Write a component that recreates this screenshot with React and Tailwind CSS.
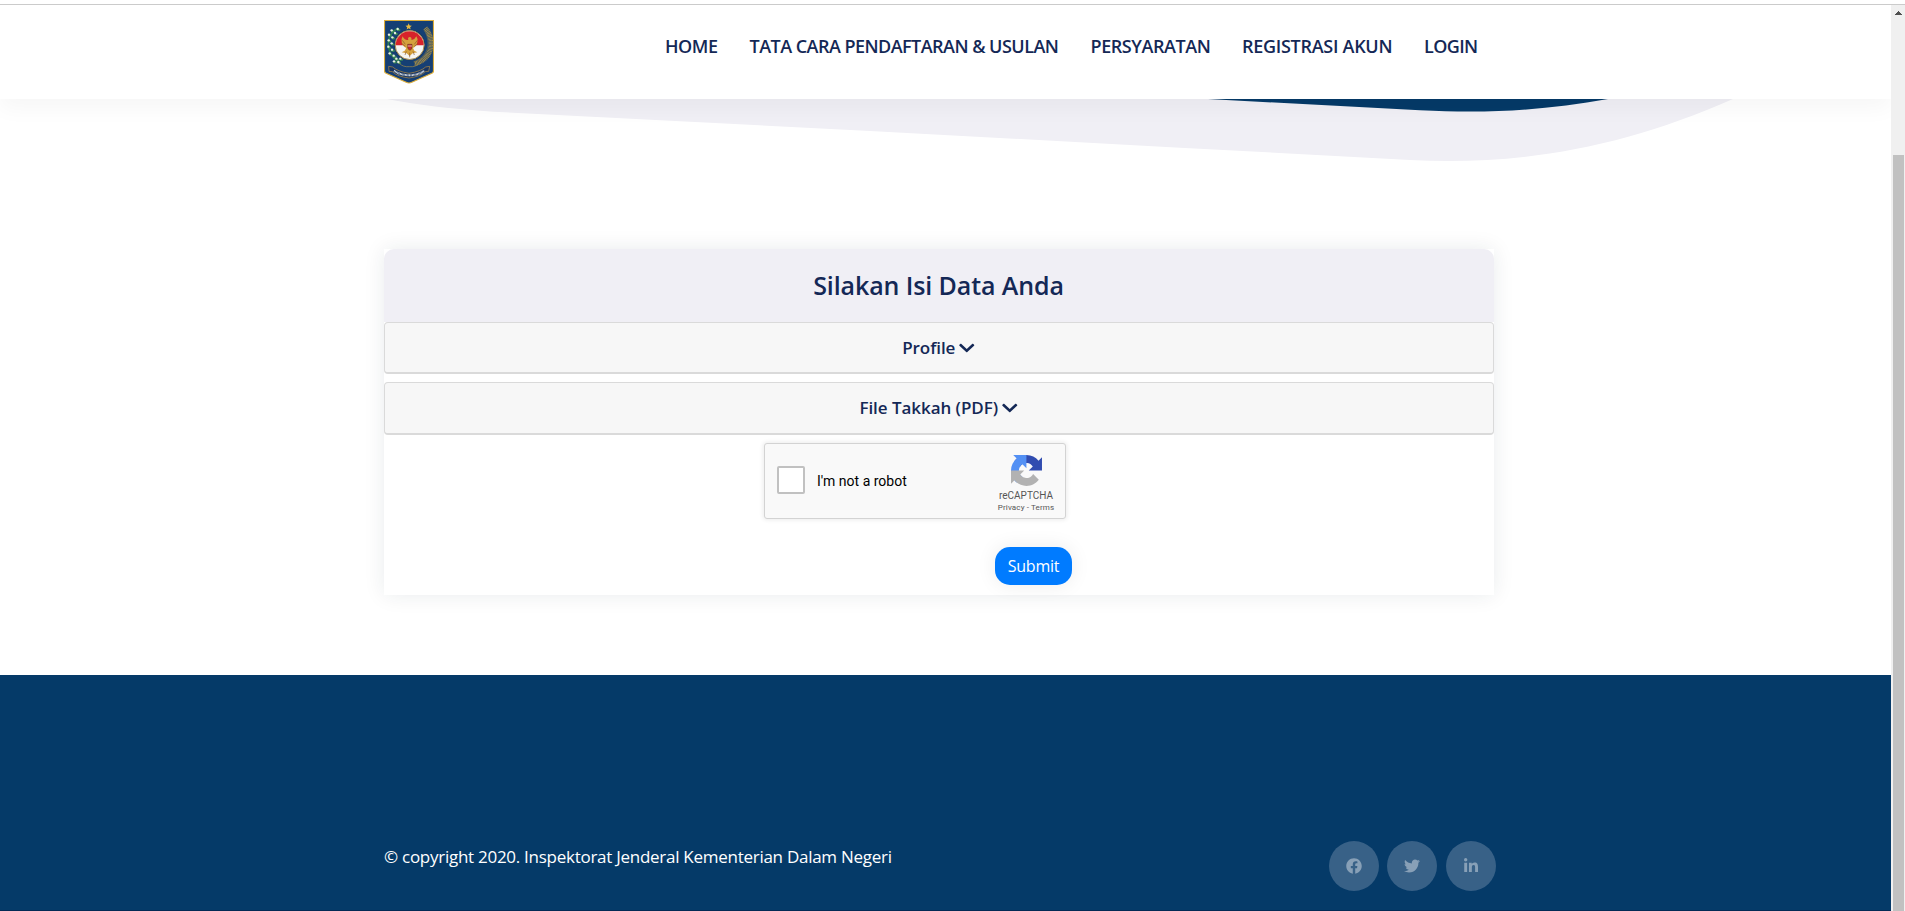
import { FaFacebook, FaTwitter, FaLinkedinIn, FaChevronDown } from 'react-icons/fa';

const NAV = [
  { label: 'HOME', box: 'w-[52.5px] tracking-[-0.45px]' },
  { label: 'TATA CARA PENDAFTARAN & USULAN', box: 'w-[309px] tracking-[-0.53px]' },
  { label: 'PERSYARATAN', box: 'w-[119.5px] tracking-[-0.42px]' },
  { label: 'REGISTRASI AKUN', box: 'w-[150px] tracking-[-0.28px]' },
  { label: 'LOGIN', box: 'w-[55px] tracking-[-0.6px]' },
];

const LEAVES = [
  [84, 87], [66, 91], [76, 99], [58, 104], [68, 112], [57, 121], [66, 130], [56, 140],
  [67, 149], [60, 160], [72, 167], [80, 176], [86, 186], [73, 184], [92, 176],
];

function Emblem() {
  return (
    <svg className="h-16 w-[50px] shrink-0" viewBox="43 60 150 192">
      <path d="M44.5 61.5h147V213q0 4-5 7l-60 27q-8.500 4-17 0l-60-27q-5-3-5-7z" fill="#153f74" stroke="#dcae3c" strokeWidth="3.500" />
      <path d="M117 70l2.700 6.500 6.800.4-5.200 4.500 1.700 6.800-6-3.700-6 3.700 1.700-6.800-5.200-4.500 6.800-.4z" fill="#e8b943" />
      <path d="M86 84C58 98 48 130 62 158q8 18 30 30" fill="none" stroke="#2d7b52" strokeWidth="5" />
      {LEAVES.map(([x, y], i) => (
        <g key={i}>
          <ellipse cx={x + 3} cy={y + 3} rx="5.500" ry="3.500" fill="#3b8a54" />
          <circle cx={x} cy={y} r="3.600" fill="#e6f0dd" />
        </g>
      ))}
      <path d="M167 84C196 118 190 178 134 191" fill="none" stroke="#a58d48" strokeWidth="15" strokeDasharray="3 1.500" />
      <path d="M171 82C198 120 190 180 134 195M163 90C184 122 180 168 132 186" fill="none" stroke="#6e6d4b" strokeWidth="2" />
      <circle cx="120" cy="135" r="46" fill="#1d3357" />
      <circle cx="120" cy="135" r="43.500" fill="#f5f5f3" stroke="#a99152" strokeWidth="3" />
      <path d="M78 136a42 42 0 0 1 84 0z" fill="#d8232a" />
      <path d="M116 120q-3-8 4-9 7 0 5 8 8 3 15-10 6 8 3 18-2 12-13 17l4 8 9 5-14 3-9 8-9-8-15-3 9-5 5-8q-12-5-14-17-2-10 3-18 6 13 17 11z" fill="#d5a13d" />
      <path d="M98 121l9 12M96 130l11 9M143 121l-9 12M146 130l-12 9M110 154l-4 11M130 154l4 11M120 158v14" stroke="#87572a" strokeWidth="2" />
      <path d="M114 133h13v9q-1 7-6 9-6-2-7-9z" fill="#c72c29" stroke="#48321f" strokeWidth="1.500" />
      <path d="M114 138h13" stroke="#eee" strokeWidth="2" />
      <path d="M57 199l12 2q14 13 49 19 36-6 50-19l12-2-3 15-10 1q-16 15-49 19-34-4-50-19l-10-1z" fill="#173461" stroke="#b98f42" strokeWidth="2" />
      <path d="M73 212q18 13 46 14 28-1 45-14" fill="none" stroke="#dfe5eb" strokeWidth="6" strokeDasharray="2.600 1.400" />
      <path d="M88 189q12 13 31 11 19 2 31-11" fill="none" stroke="#a58d48" strokeWidth="2" />
    </svg>
  );
}

function RecaptchaMark() {
  return (
    <svg className="size-[31px] opacity-90" viewBox="0 0 64 64">
      <path fill="#1c3aa9" d="M64 31.955l-.033-1.370V4.687l-7.160 7.160C50.948 4.674 42.033.093 32.050.093c-10.400 0-19.622 4.960-25.458 12.640l11.736 11.860a15.550 15.550 0 0 1 4.754-5.334c2.050-1.600 4.952-2.906 8.968-2.906.485 0 .860.057 1.135.163 4.976.393 9.288 3.140 11.828 7.124l-8.307 8.307L64 31.953" />
      <path fill="#4285f4" d="M31.862.094l-1.370.033H4.594l7.160 7.160C4.580 13.147 0 22.060 0 32.046c0 10.400 4.960 19.622 12.640 25.458L24.500 45.768a15.550 15.550 0 0 1-5.334-4.754c-1.600-2.050-2.906-4.952-2.906-8.968 0-.485.057-.860.163-1.135.393-4.976 3.140-9.288 7.124-11.828l8.307 8.307L31.860.095" />
      <path fill="#ababab" d="M.001 32.045l.033 1.370v25.898l7.160-7.160c5.860 7.173 14.774 11.754 24.760 11.754 10.400 0 19.622-4.960 25.458-12.640l-11.736-11.860a15.550 15.550 0 0 1-4.754 5.334c-2.050 1.600-4.952 2.906-8.968 2.906-.485 0-.860-.057-1.135-.163-4.976-.393-9.288-3.140-11.828-7.124l8.307-8.307c-10.522.040-22.400.066-27.295-.005" />
    </svg>
  );
}

function Header() {
  return (
    <header className="relative z-10 flex h-[94px] shrink-0 bg-white pl-[384px] pt-[15px] shadow-[0_10px_20px_rgba(0,0,0,0.035)]">
      <Emblem />
      <nav className="ml-[231px] flex h-[52px] items-center gap-8">
        {NAV.map((item) => (
          <a key={item.label} className={`${item.box} whitespace-nowrap text-[18px] leading-6 font-semibold text-[#142856]`}>
            {item.label}
          </a>
        ))}
      </nav>
    </header>
  );
}

function Waves() {
  return (
    <svg className="h-[62px] w-full shrink-0" viewBox="0 99 1891 62">
      <path fill="#f0eff5" d="M387 99Q430 107.500 493 111.700L870 131L1180 147.700L1410 160C1520 165.500 1622 148 1733 99z" />
      <path fill="#053a68" d="M1208 99L1420 110.200C1494 114 1548 109.500 1608 99z" />
    </svg>
  );
}

function Panel({ title, className }) {
  return (
    <div className={`flex items-center justify-center gap-1 rounded border border-b-2 border-[#dadada] bg-[#f7f7f7] pr-px text-[17px] leading-6 font-semibold text-[#142856] ${className}`}>
      <span className="tracking-[-0.05px]">{title}</span>
      <FaChevronDown className="h-4 w-[15.5px]" preserveAspectRatio="none" />
    </div>
  );
}

function Captcha() {
  return (
    <div className="ml-[380px] mt-2 flex h-[76px] w-[302px] rounded-[3px] border border-[#d3d3d3] bg-[#f9f9f9] font-['Roboto',sans-serif] shadow-[0_0_4px_1px_rgba(0,0,0,0.08)]">
      <div className="flex flex-1 items-center pl-3">
        <div className="mb-0.5 size-7 rounded-[2px] border-2 border-[#c1c1c1] bg-white" />
        <span className="ml-3 text-[14px] leading-[17px] text-black">I'm not a robot</span>
      </div>
      <div className="flex w-[78px] flex-col items-center pt-[11px] text-[#555]">
        <RecaptchaMark />
        <span className="mt-1 text-[10px] leading-3">reCAPTCHA</span>
        <span className="mt-px text-[8px] leading-[10px] tracking-[0.14px]">Privacy - Terms</span>
      </div>
    </div>
  );
}

function FormCard() {
  return (
    <section className="ml-[384px] mt-[88px] flex h-[346px] w-[1110px] shrink-0 flex-col bg-white shadow-[0_0_20px_rgba(20,40,60,0.09)]">
      <div className="flex h-[73px] shrink-0 items-center justify-center rounded-t-[10px] bg-[#f0eff5]">
        <h1 className="mb-0.5 mr-px text-[25px] leading-8 font-semibold tracking-[-0.1px] text-[#142856]">Silakan Isi Data Anda</h1>
      </div>
      <Panel title="Profile" className="h-[52px]" />
      <Panel title="File Takkah (PDF)" className="mt-2 h-[53px]" />
      <Captcha />
      <button className="ml-[611px] mt-7 h-[38px] w-[77px] rounded-[15px] bg-[#007bff] text-[16px] leading-6 tracking-[-0.2px] text-white shadow-[0_0_20px_rgba(0,0,0,0.08)]">
        Submit
      </button>
    </section>
  );
}

function Footer() {
  return (
    <footer className="mt-20 flex flex-1 flex-col justify-between bg-[#053a68]">
      <div className="flex items-start pl-[384px] pt-[166px]">
        <p className="mt-1 w-[945px] text-[17px] leading-6 tracking-[-0.27px] text-white">
          © copyright 2020. Inspektorat Jenderal Kementerian Dalam Negeri
        </p>
        <div className="flex gap-[8.4px]">
          {[FaFacebook, FaTwitter, FaLinkedinIn].map((Icon, i) => (
            <a key={i} className="flex size-[50px] items-center justify-center rounded-full bg-[#386187]">
              <Icon className="size-4 text-[#88a0b7]" />
            </a>
          ))}
        </div>
      </div>
      <div className="h-px bg-[#032a55]" />
    </footer>
  );
}

function Scrollbar() {
  return (
    <div className="flex w-3.5 shrink-0 flex-col items-center bg-[#f0f0f0] pt-1.5">
      <svg className="h-1 w-[7px]" viewBox="0 0 7 4" shapeRendering="crispEdges">
        <path d="M3 0h1v1h1v1h1v1h1v1H0V3h1V2h1V1h1z" fill="#505050" />
      </svg>
      <div className="ml-px mt-[140px] w-[11px] flex-1 bg-[#c1c1c1]" />
    </div>
  );
}

export default function App() {
  return (
    <div className="flex h-[911px] w-[1905px] flex-col overflow-hidden bg-white font-['Open_Sans',sans-serif]">
      <div className="h-[5px] shrink-0 border-b border-[#cbcbcb]" />
      <div className="flex min-h-0 flex-1">
        <div className="flex w-[1891px] flex-col overflow-hidden">
          <Header />
          <Waves />
          <FormCard />
          <Footer />
        </div>
        <Scrollbar />
      </div>
    </div>
  );
}
